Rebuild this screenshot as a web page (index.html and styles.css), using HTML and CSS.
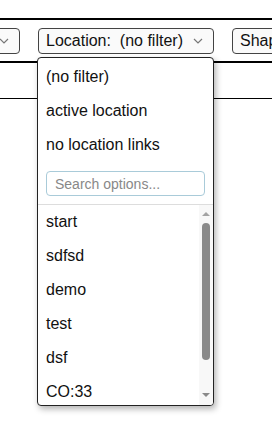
FILE: index.html
```html
<!DOCTYPE html>
<html lang="en">
<head>
  <meta charset="UTF-8" />
  <meta name="viewport" content="width=device-width, initial-scale=1.0" />
  <title>Filters</title>
  <link rel="stylesheet" href="styles.css">
</head>
<body>
  <div class="page">
    <div class="toolbar">
      <div class="filters">
        <button class="filter filter-first" type="button">
          <span class="filter-label">Status:&nbsp; (all)</span>
          <svg class="chevron" width="10" height="6" viewBox="0 0 10 6"><path d="M1 1l4 4 4-4" fill="none" stroke="#777" stroke-width="1.2"/></svg>
        </button>

        <div class="filter-wrap">
          <button class="filter" type="button">
            <span class="filter-label">Location:&nbsp; (no filter)</span>
            <svg class="chevron" width="10" height="6" viewBox="0 0 10 6"><path d="M1 1l4 4 4-4" fill="none" stroke="#777" stroke-width="1.2"/></svg>
          </button>

          <div class="menu">
            <ul class="menu-fixed">
              <li>(no filter)</li>
              <li>active location</li>
              <li>no location links</li>
            </ul>
            <div class="menu-search">
              <input type="text" placeholder="Search options...">
            </div>
            <div class="menu-scroll">
              <ul class="menu-list">
                <li>start</li>
                <li>sdfsd</li>
                <li>demo</li>
                <li>test</li>
                <li>dsf</li>
                <li>CO:33</li>
                <li>north</li>
              </ul>
              <div class="scrollbar">
                <span class="arrow arrow-up"></span>
                <span class="thumb"></span>
                <span class="arrow arrow-down"></span>
              </div>
            </div>
          </div>
        </div>

        <button class="filter" type="button">
          <span class="filter-label">Shape:&nbsp; (no filter)</span>
          <svg class="chevron" width="10" height="6" viewBox="0 0 10 6"><path d="M1 1l4 4 4-4" fill="none" stroke="#777" stroke-width="1.2"/></svg>
        </button>
      </div>
      <div class="results"></div>
    </div>
  </div>
</body>
</html>
```

FILE: styles.css
```css
body {
  margin: 0;
  font-family: "Liberation Sans", Arial, sans-serif;
  font-size: 16px;
  color: #111;
  background: #fff;
}
.page {
  height: 100vh;
  overflow: hidden;
}
.toolbar {
  margin-top: 18px;
  border-top: 2px solid #000;
}
.filters {
  display: flex;
  gap: 18px;
  padding: 8px 0 7px;
  border-bottom: 2px solid #000;
  margin-left: -71px;
  white-space: nowrap;
}
.filter-wrap {
  position: relative;
}
.filter {
  display: flex;
  align-items: center;
  gap: 10px;
  height: 26px;
  padding: 0 10px 0 7px;
  font: inherit;
  color: #111;
  background: #fafafa;
  border: 1px solid #444;
  border-radius: 4px;
  flex-shrink: 0;
}
.filter-first {
  width: 91px;
  justify-content: flex-end;
  overflow: hidden;
}
.chevron {
  flex-shrink: 0;
}
.results {
  height: 35px;
  border-bottom: 1px solid #000;
}
.menu {
  position: absolute;
  top: 29px;
  left: -1px;
  width: 175px;
  height: 347px;
  background: #fff;
  border: 1px solid #222;
  border-radius: 4px;
  box-shadow: 2px 3px 6px rgba(0, 0, 0, 0.3);
  display: flex;
  flex-direction: column;
  overflow: hidden;
  z-index: 2;
}
.menu ul {
  list-style: none;
  margin: 0;
  padding: 0;
}
.menu .menu-fixed {
  padding-top: 2px;
}
.menu li {
  height: 34px;
  line-height: 34px;
  padding-left: 8px;
}
.menu-search {
  padding: 9px 8px 8px;
  border-bottom: 1px solid #ddd;
}
.menu-search input {
  box-sizing: border-box;
  width: 100%;
  height: 25px;
  padding: 0 8px;
  font-family: inherit;
  font-size: 14px;
  border: 1px solid #a9cbd9;
  border-radius: 4px;
  outline: none;
}
.menu-search input::placeholder {
  color: #888;
}
.menu-scroll {
  flex: 1;
  display: flex;
  min-height: 0;
  overflow: hidden;
}
.menu-list {
  flex: 1;
}
.scrollbar {
  width: 14px;
  flex-shrink: 0;
  background: #f8f8f8;
  display: flex;
  flex-direction: column;
  align-items: center;
  padding: 7px 0 8px;
}
.arrow {
  width: 0;
  height: 0;
  border-left: 4px solid transparent;
  border-right: 4px solid transparent;
}
.arrow-up {
  border-bottom: 4px solid #a3a3a3;
}
.arrow-down {
  margin-top: auto;
  border-top: 4px solid #8a8a8a;
}
.thumb {
  width: 8px;
  height: 137px;
  margin-top: 7px;
  background: #8a8a8a;
  border-radius: 4px;
}
```
